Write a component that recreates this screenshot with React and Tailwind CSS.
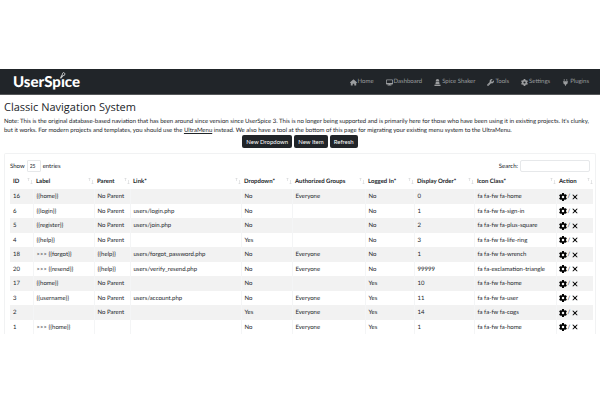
import { FaDesktop, FaGear, FaHouse, FaPlug, FaWrench, FaXmark } from "react-icons/fa6";

const ShakerIcon = ({ className }) => (
  <svg viewBox="0 0 16 16" fill="currentColor" className={className} aria-hidden="true">
    <path d="M4 4a4 4 0 0 1 8 0v1H4zM4 6h8v2l1 4H3l1-4z" />
    <path d="M1 13h14v3H1z" />
  </svg>
);

const navLinks = [
  { label: "Home", Icon: FaHouse },
  { label: "Dashboard", Icon: FaDesktop },
  { label: "Spice Shaker", Icon: ShakerIcon },
  { label: "Tools", Icon: FaWrench },
  { label: "Settings", Icon: FaGear },
  { label: "Plugins", Icon: FaPlug },
];

const columns = [
  { label: "ID", width: "w-[23px]" },
  { label: "Label", width: "w-[61px]" },
  { label: "Parent", width: "w-[36px]" },
  { label: "Link*", width: "w-[111px]" },
  { label: "Dropdown*", width: "w-[51px]" },
  { label: "Authorized Groups", width: "w-[73px]" },
  { label: "Logged In*", width: "w-[49px]" },
  { label: "Display Order*", width: "w-[60px]" },
  { label: "Icon Class*", width: "w-[82px]" },
  { label: "Action", width: "w-[37px]" },
];

const rows = [
  ["16", "{{home}}", "No Parent", "", "No", "Everyone", "No", "0", "fa fa-fw fa-home"],
  ["6", "{{login}}", "No Parent", "users/login.php", "No", "", "No", "1", "fa fa-fw fa-sign-in"],
  ["5", "{{register}}", "No Parent", "users/join.php", "No", "", "No", "2", "fa fa-fw fa-plus-square"],
  ["4", "{{help}}", "No Parent", "", "Yes", "", "No", "3", "fa fa-fw fa-life-ring"],
  ["18", ">>> {{forgot}}", "{{help}}", "users/forgot_password.php", "No", "Everyone", "No", "1", "fa fa-fw fa-wrench"],
  ["20", ">>> {{resend}}", "{{help}}", "users/verify_resend.php", "No", "Everyone", "No", "99999", "fa fa-exclamation-triangle"],
  ["17", "{{home}}", "No Parent", "", "No", "", "Yes", "10", "fa fa-fw fa-home"],
  ["3", "{{username}}", "No Parent", "users/account.php", "No", "Everyone", "Yes", "11", "fa fa-fw fa-user"],
  ["2", "", "No Parent", "", "Yes", "Everyone", "Yes", "14", "fa fa-fw fa-cogs"],
  ["1", ">>> {{home}}", "", "", "No", "Everyone", "Yes", "1", "fa fa-fw fa-home"],
];

const Logo = () => (
  <a href="#" className="relative font-['Lato',sans-serif] text-[15px] leading-5 font-black text-white">
    UserSpıce
    <svg viewBox="0 0 16 16" className="absolute top-0 right-[14px] size-[7px]" aria-hidden="true">
      <path d="M2 14 6 6l4 3-5 6z" fill="#c9ccce" />
      <path d="M7 5 10 1l4 3-3 5z" fill="none" stroke="#c9ccce" strokeWidth="2" />
    </svg>
  </a>
);

const Navbar = () => (
  <nav className="flex items-center justify-between border-b border-[#555759] bg-[#212529] pt-[3px] pr-[11px] pb-[2px] pl-[13px]">
    <Logo />
    <ul className="flex gap-3 text-[6px] leading-5 text-[#9b9d9f]">
      {navLinks.map(({ label, Icon }) => (
        <li key={label}>
          <a href="#" className="flex items-center gap-px">
            <Icon className="size-[7px]" />
            {label}
          </a>
        </li>
      ))}
    </ul>
  </nav>
);

const ActionButton = ({ children }) => (
  <button type="button" className="rounded-[2px] bg-[#212529] px-1 text-[6px] leading-[13px] text-white">
    {children}
  </button>
);

const SortIcon = () => (
  <svg viewBox="0 0 6 8" className="h-2 w-[6px] shrink-0" fill="none" stroke="#d3d5d7" strokeWidth="0.600" aria-hidden="true">
    <path d="M1.500 4V1M.5 2l1-1 1 1M4.500 3v4M3.500 6l1 1 1-1" />
  </svg>
);

const MenuTable = () => (
  <table className="mt-px w-full table-fixed text-left">
    <thead>
      <tr className="h-4">
        {columns.map(({ label, width }) => (
          <th key={label} className={`${width} pl-[3px] font-bold whitespace-nowrap`}>
            <div className="flex items-center justify-between">
              {label}
              <SortIcon />
            </div>
          </th>
        ))}
      </tr>
    </thead>
    <tbody>
      {rows.map((row) => (
        <tr key={row[0]} className="odd:h-[15px] odd:bg-[#f2f2f2] even:h-[14px]">
          {row.map((cell, i) => (
            <td key={columns[i].label} className="border-r border-[#f4f5f6] pl-[3px] whitespace-nowrap">
              {cell}
            </td>
          ))}
          <td className="pl-[2px]">
            <div className="flex items-center gap-px">
              <button type="button" aria-label="Edit">
                <FaGear className="size-[8px] text-black" />
              </button>
              /
              <button type="button" aria-label="Delete">
                <FaXmark className="size-[8px] text-black" />
              </button>
            </div>
          </td>
        </tr>
      ))}
    </tbody>
  </table>
);

export default function App() {
  return (
    <div className="bg-white pt-[69px] font-['Lato',sans-serif] text-[6px] leading-[9px] text-[#212529] [text-rendering:geometricPrecision]">
      <Navbar />
      <main className="px-1 pt-[6px]">
        <h1 className="font-['Open_Sans',sans-serif] text-[11px] leading-[14px] font-normal">
          Classic Navigation System
        </h1>
        <p className="mt-[2px]">
          Note: This is the original database-based naviation that has been around since version since UserSpice 3. This
          is no longer being supported and is primarily here for those who have been using it in existing projects. It's
          clunky, but it works. For modern projects and templates, you should use the{" "}
          <a href="#" className="underline">
            UltraMenu
          </a>{" "}
          instead. We also have a tool at the bottom of this page for migrating your existing menu system to the
          UltraMenu.
        </p>
        <div className="flex justify-center gap-[2px]">
          <ActionButton>New Dropdown</ActionButton>
          <ActionButton>New Item</ActionButton>
          <ActionButton>Refresh</ActionButton>
        </div>
        <section className="mt-[5px] rounded-t-[2px] border border-b-0 border-[#f1f2f3] px-[5px] pt-[6px]">
          <div className="flex items-center justify-between">
            <label className="flex items-center gap-[2px]">
              Show
              <select
                defaultValue="25"
                className="h-[12px] w-[14px] appearance-none rounded-[1px] border border-[#e6e8ea] pl-[2px] text-[5px]"
              >
                <option>10</option>
                <option>25</option>
                <option>50</option>
              </select>
              entries
            </label>
            <label className="flex items-center gap-[2px]">
              Search:
              <input type="search" className="h-[12px] w-[70px] rounded-[2px] border border-[#e6e8ea]" />
            </label>
          </div>
          <MenuTable />
        </section>
      </main>
    </div>
  );
}
